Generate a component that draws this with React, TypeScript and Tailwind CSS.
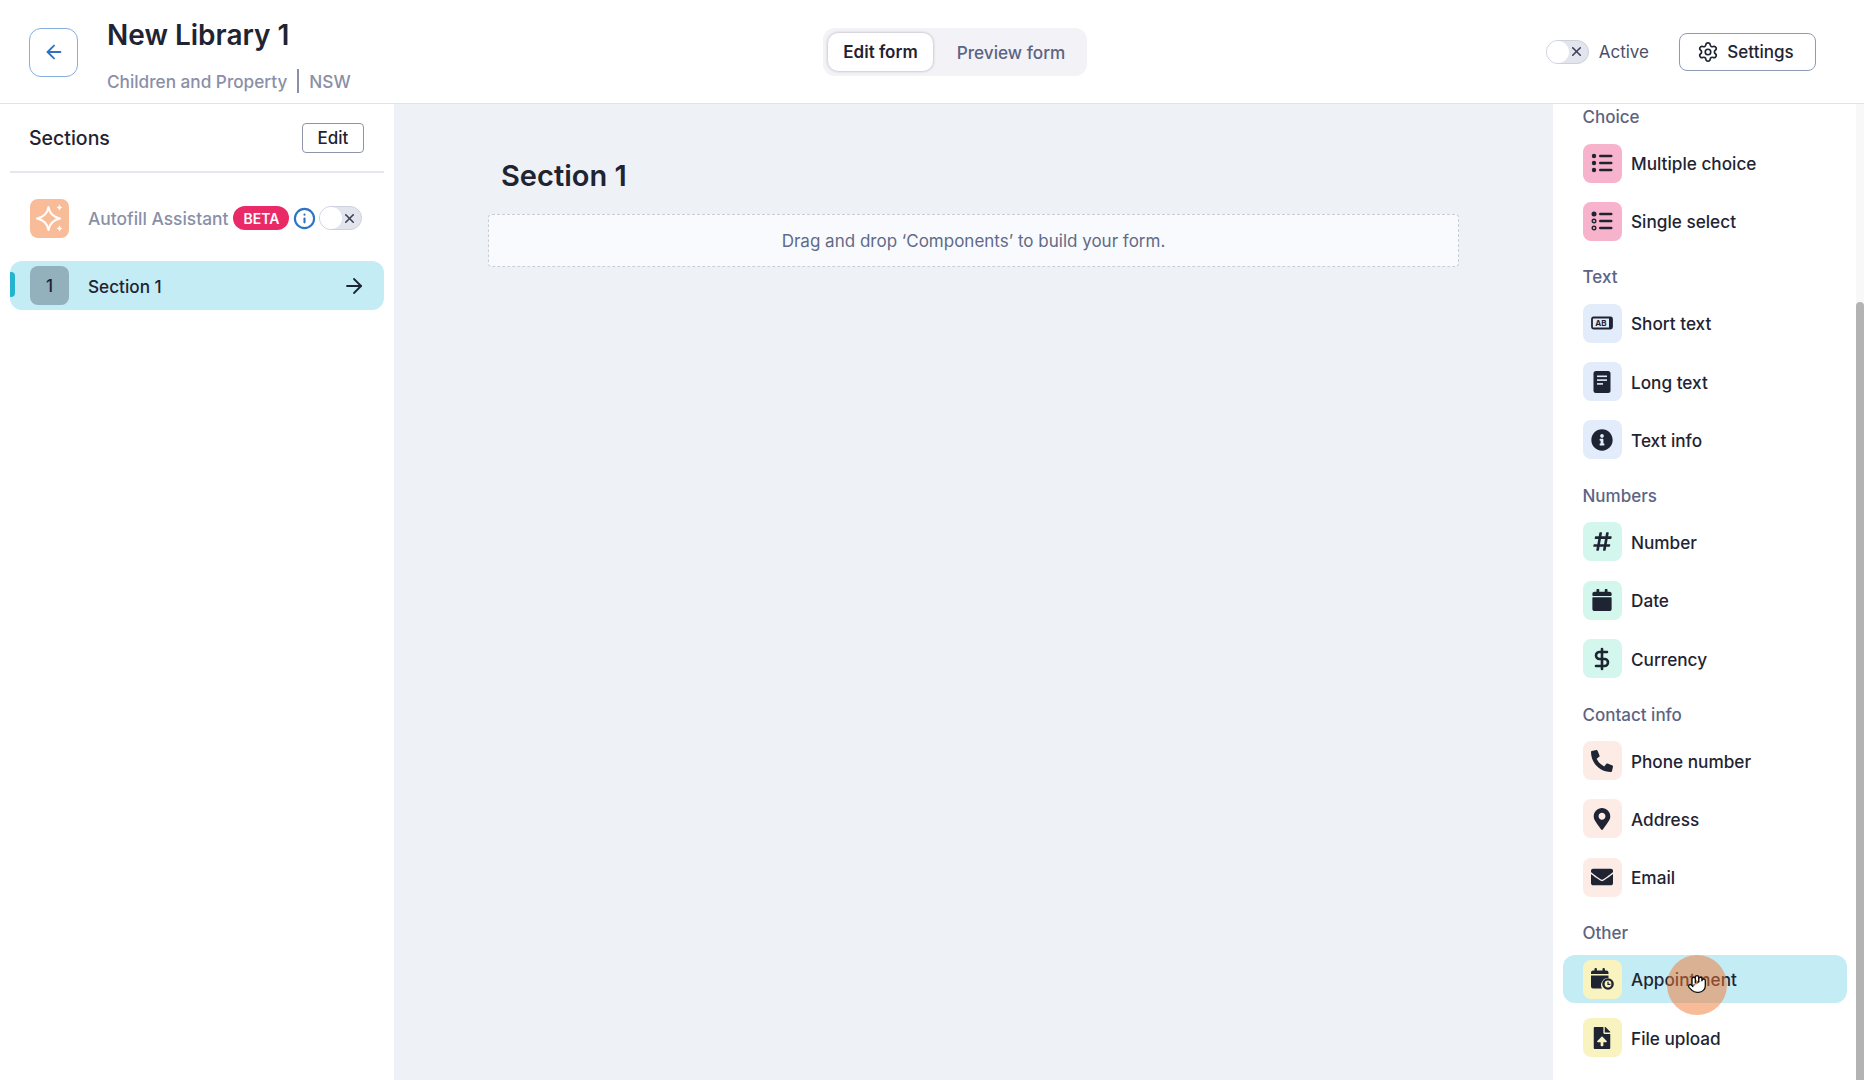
import type { ReactNode } from 'react';
import { ArrowLeft, ArrowRight, DollarSign, Hand, Info, Settings, X } from 'lucide-react';
import {
  FaCalendar,
  FaEnvelope,
  FaFileUpload,
  FaHashtag,
  FaInfoCircle,
  FaMapMarkerAlt,
  FaPhoneAlt,
} from 'react-icons/fa';

const INK = '#1f2433';

function ChoiceIcon({ single }: { single?: boolean }) {
  return (
    <svg width="22" height="20" viewBox="0 0 22 20" fill={INK}>
      {single ? (
        <>
          <circle cx="3" cy="3" r="2.5" />
          <circle cx="3" cy="10" r="1.8" fill="none" stroke={INK} strokeWidth="1.4" />
          <circle cx="3" cy="17" r="1.8" fill="none" stroke={INK} strokeWidth="1.4" />
        </>
      ) : (
        <>
          <circle cx="3" cy="3" r="2.2" />
          <circle cx="3" cy="10" r="2.2" />
          <circle cx="3" cy="17" r="2.2" />
        </>
      )}
      <rect x="8" y="1.700" width="13.500" height="2.600" rx="1.300" />
      <rect x="8" y="8.700" width="13.500" height="2.600" rx="1.300" />
      <rect x="8" y="15.700" width="13.500" height="2.600" rx="1.300" />
    </svg>
  );
}

function ShortTextIcon() {
  return (
    <svg width="24" height="24" viewBox="0 0 24 24">
      <rect x="2" y="6.500" width="20" height="11" rx="1.500" fill="none" stroke={INK} strokeWidth="1.800" />
      <rect x="19" y="6.500" width="3" height="11" fill={INK} />
      <text x="11" y="15.300" textAnchor="middle" fontSize="8" fontWeight="700" fontFamily="Inter, sans-serif" fill={INK}>
        AB
      </text>
    </svg>
  );
}

function LongTextIcon() {
  return (
    <svg width="24" height="24" viewBox="0 0 24 24">
      <rect x="3.500" y="1" width="17" height="22" rx="2.500" fill={INK} />
      <rect x="7" y="5.500" width="10" height="1.600" fill="#e3ecfb" />
      <rect x="7" y="9.300" width="10" height="1.600" fill="#e3ecfb" />
      <rect x="7" y="13.100" width="6" height="1.600" fill="#e3ecfb" />
    </svg>
  );
}

function AppointmentIcon() {
  return (
    <svg width="24" height="24" viewBox="0 0 24 24" fill={INK}>
      <rect x="4.500" y="1" width="2.400" height="4" rx="1" />
      <rect x="12.500" y="1" width="2.400" height="4" rx="1" />
      <path d="M1 5.500a2 2 0 0 1 2-2h13.500a2 2 0 0 1 2 2V7H1z" />
      <path d="M1 8.500h17.500v2.600a7 7 0 0 0-6.500 10.400H3a2 2 0 0 1-2-2z" />
      <circle cx="18" cy="17" r="5.800" />
      <circle cx="18" cy="17" r="3.400" fill="#f9f3c0" />
      <path d="M17.400 14.800h1.200v2h1.800v1.100h-3z" />
    </svg>
  );
}

function Sparkle() {
  return (
    <svg width="30" height="30" viewBox="0 0 30 30" fill="none" stroke="#fff" strokeWidth="2" strokeLinejoin="round">
      <path d="M13.500 4C14.500 10 18 14 25 15.500 18 17 14.500 21 13.500 27 12.500 21 9 17 2 15.500 9 14 12.500 10 13.500 4z" />
      <path fill="#fff" stroke="none" d="M24.500 1c.3 2 1 3 3 3.500-2 .5-2.700 1.500-3 3.500-.3-2-1-3-3-3.500 2-.5 2.700-1.500 3-3.500zM24.500 22c.3 2 1 3 3 3.500-2 .5-2.700 1.500-3 3.500-.3-2-1-3-3-3.500 2-.5 2.700-1.500 3-3.500z" />
    </svg>
  );
}

function Toggle() {
  return (
    <div className="flex h-6 w-[43px] shrink-0 items-center justify-between rounded-full border border-[#cdd1de] bg-[#e2e5ee] pr-1">
      <div className="h-[22px] w-[22px] rounded-full bg-white" />
      <X size={15} strokeWidth={2.5} color="#3b4154" />
    </div>
  );
}

type Item = { label: string; bg: string; icon: ReactNode; active?: boolean };

const groups: { title: string; items: Item[] }[] = [
  {
    title: 'Choice',
    items: [
      { label: 'Multiple choice', bg: 'bg-[#f7b3cb]', icon: <ChoiceIcon /> },
      { label: 'Single select', bg: 'bg-[#f7b3cb]', icon: <ChoiceIcon single /> },
    ],
  },
  {
    title: 'Text',
    items: [
      { label: 'Short text', bg: 'bg-[#e3ecfb]', icon: <ShortTextIcon /> },
      { label: 'Long text', bg: 'bg-[#e3ecfb]', icon: <LongTextIcon /> },
      { label: 'Text info', bg: 'bg-[#e3ecfb]', icon: <FaInfoCircle size={22} color={INK} /> },
    ],
  },
  {
    title: 'Numbers',
    items: [
      { label: 'Number', bg: 'bg-[#d3f7ec]', icon: <FaHashtag size={21} color={INK} /> },
      { label: 'Date', bg: 'bg-[#d3f7ec]', icon: <FaCalendar size={22} color={INK} /> },
      { label: 'Currency', bg: 'bg-[#d3f7ec]', icon: <DollarSign size={24} color={INK} strokeWidth={2.6} /> },
    ],
  },
  {
    title: 'Contact info',
    items: [
      { label: 'Phone number', bg: 'bg-[#fdebe6]', icon: <FaPhoneAlt size={22} color={INK} /> },
      { label: 'Address', bg: 'bg-[#fdebe6]', icon: <FaMapMarkerAlt size={22} color={INK} /> },
      { label: 'Email', bg: 'bg-[#fdebe6]', icon: <FaEnvelope size={22} color={INK} /> },
    ],
  },
  {
    title: 'Other',
    items: [
      { label: 'Appointment', bg: 'bg-[#f9f3c0]', icon: <AppointmentIcon />, active: true },
      { label: 'File upload', bg: 'bg-[#f9f3c0]', icon: <FaFileUpload size={22} color={INK} /> },
    ],
  },
];

function ComponentRow({ item }: { item: Item }) {
  return (
    <div className={`relative flex h-12 items-center gap-[9.500px] rounded-xl pl-[19.500px] ${item.active ? 'bg-[#c3ecf5]' : ''}`}>
      <div className={`flex h-[39px] w-[39px] items-center justify-center rounded-lg ${item.bg}`}>{item.icon}</div>
      <span className="pt-[2px] text-[17.200px] font-medium text-[#1f2433]">{item.label}</span>
      {item.active && (
        <>
          <div className="absolute top-[0px] left-[104px] h-[60px] w-[60px] rounded-full bg-[#f17731]/50" />
          <Hand className="absolute top-[19px] left-[124px]" size={20} fill="#fff" color="#111" strokeWidth={1.6} />
        </>
      )}
    </div>
  );
}

export default function App() {
  return (
    <div className="flex h-[1080px] w-[1864px] flex-col overflow-hidden bg-white font-['Inter',sans-serif] text-[#1f2433]">
      <header className="flex h-[104px] shrink-0 items-center border-b border-[#e2e3e8] pr-[48px] pl-[29px]">
        <button className="mt-px flex h-[49px] w-[49px] items-center justify-center rounded-xl border border-[#86ade0]">
          <ArrowLeft size={22} color="#2f73c0" strokeWidth={2} />
        </button>
        <div className="ml-[29px] w-[400px] pt-[9px]">
          <h1 className="text-[28px] leading-[34px] font-semibold">New Library 1</h1>
          <div className="mt-[17px] flex items-center text-[17.200px] font-medium text-[#8a8fa8]">
            <span>Children and Property</span>
            <span className="mx-[10px] h-6 w-0.5 bg-[#8a8fa8]" />
            <span>NSW</span>
          </div>
        </div>
        <div className="ml-[316px] flex h-12 items-center rounded-xl bg-[#f3f2f6] px-[5px]">
          <div className="flex h-[38px] w-[105px] items-center justify-center rounded-[10px] bg-white pt-[3px] text-[17px] font-semibold shadow-[0_0_3px_rgba(60,60,80,0.4)]">
            Edit form
          </div>
          <div className="w-[149px] pt-[2px] pl-[7px] text-center text-[17.200px] font-medium text-[#5c6484]">Preview form</div>
        </div>
        <div className="ml-auto flex items-center">
          <Toggle />
          <span className="ml-[10px] pt-[3px] text-[17px] text-[#4a5068]">Active</span>
          <button className="ml-[30px] flex h-[38px] w-[137px] items-center justify-center gap-[8px] rounded-lg border border-[#8d9bb5] pr-1 text-[17px] font-medium">
            <Settings size={22} strokeWidth={1.8} />
            <span className="pt-[3px]">Settings</span>
          </button>
        </div>
      </header>

      <div className="flex min-h-0 flex-1">
        <aside className="w-[394px] shrink-0 px-[10px]">
          <div className="flex h-[69px] items-center justify-between border-b-2 border-[#e6e7ee] pr-5 pl-[19px]">
            <span className="pt-[2px] text-[19.500px] font-medium">Sections</span>
            <button className="flex h-[30px] w-[62px] items-center justify-center rounded border border-[#8f94ab] pt-[2px] text-[17px] font-medium">
              Edit
            </button>
          </div>
          <div className="mt-[25px] flex h-[40px] items-center pl-5">
            <div className="flex h-[39px] w-[39px] items-center justify-center rounded-lg bg-[#f9bc98]">
              <Sparkle />
            </div>
            <span className="ml-[19px] pt-[2px] text-[17.400px] font-medium text-[#8a8fa8]">Autofill Assistant</span>
            <span className="ml-[5px] flex h-6 items-center rounded-full bg-[#e92a67] px-[10px] text-[14px] font-semibold text-white">
              BETA
            </span>
            <Info className="ml-[4px]" size={23} color="#2f73c0" strokeWidth={2.2} />
            <div className="ml-[3px]">
              <Toggle />
            </div>
          </div>
          <div className="relative mt-[23px] flex h-[49px] items-center rounded-xl bg-[#c3ecf5] pr-[18px] pl-5">
            <div className="absolute top-[11px] left-0 h-[25px] w-[5px] rounded-r bg-[#25b3d0]" />
            <div className="flex h-[39px] w-[39px] items-center justify-center rounded-lg bg-[#92b1bd] pt-[2px] text-[17px] font-medium">
              1
            </div>
            <span className="ml-[19px] flex-1 pt-[2px] text-[17.200px] font-medium">Section 1</span>
            <ArrowRight size={24} strokeWidth={1.8} />
          </div>
        </aside>

        <main className="flex-1 bg-[#eef1f6] px-[94px] pt-[52px]">
          <h2 className="pl-[13px] text-[29px] leading-10 font-semibold">Section 1</h2>
          <div className="mt-[18px] flex h-[53px] items-center justify-center rounded border border-dashed border-[#c9cdd8] bg-[#f9fafd] pt-[3px] text-[17px] text-[#616a87]">
            Drag and drop ‘Components’ to build your form.
          </div>
        </main>

        <section className="w-[303px] shrink-0 pt-[3px] pr-[9px] pl-[10px]">
          {groups.map((g, i) => (
            <div key={g.title} className={i > 0 ? 'mt-[22px]' : ''}>
              <div className="mb-[12px] pl-[19.500px] text-[17px] leading-5 font-medium text-[#5c6484]">{g.title}</div>
              <div className="flex flex-col gap-[10.330px]">
                {g.items.map((item) => (
                  <ComponentRow key={item.label} item={item} />
                ))}
              </div>
            </div>
          ))}
        </section>

        <div className="w-2 shrink-0 bg-[#f8f8f8] pt-[198px]">
          <div className="h-full rounded-t bg-[#b3b3b3]" />
        </div>
      </div>
    </div>
  );
}
